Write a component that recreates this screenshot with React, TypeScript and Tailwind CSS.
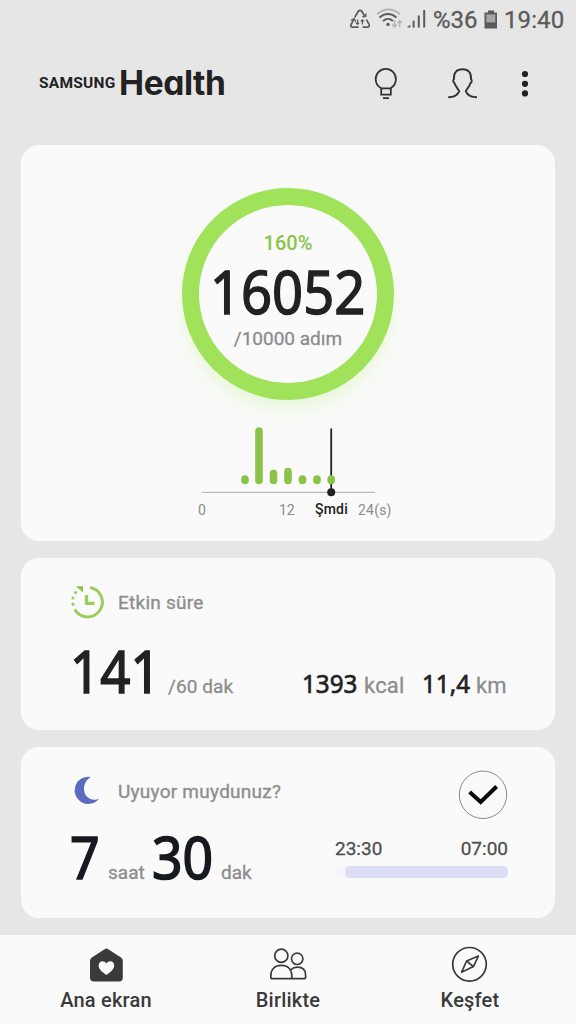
import type { ReactNode } from "react";

// Step counts per time slot, drawn as rounded bars above the 24h axis.
const STEP_BARS = [
  { x: 245, h: 9 },
  { x: 259, h: 57 },
  { x: 273.5, h: 14.5 },
  { x: 288, h: 16.5 },
  { x: 302.5, h: 9 },
  { x: 317, h: 9 },
  { x: 331.2, h: 9 },
];

function StatusBar() {
  return (
    <div className="flex h-10 items-center text-[24px] leading-10 text-[#5c5c5c] [-webkit-text-stroke:0.35px_#5c5c5c]">
      <svg className="ml-[348px] shrink-0" width="82" height="24" viewBox="348 8 82 24" fill="none">
        <g stroke="#5a5a5a" strokeWidth="1.7" strokeLinejoin="round">
          <path d="M354.7 17.4 358.3 11.2Q360 9.4 361.7 11.2L365 16.6" />
          <path d="M366.4 19.6 369.2 24.6Q369.6 27 367.4 27.1H362.6" />
          <path d="M358.6 27.1H352.6Q350.3 27 351 24.6L353.6 19.8" />
          <path d="M362.3 16.6H365.8V13.4M355.8 21.8 354.2 18.6 351 20.4" strokeWidth="1.3" />
          <path d="M357.6 19.6V24.2M355.8 22.6 357.6 24.4 359 22.8M362.4 24.6V20M360.8 21.4 362.4 19.8 364 21.4" strokeWidth="1.2" />
        </g>
        <g strokeWidth="2">
          <path d="M377.2 14.3C383.3 7.8 393.7 7.8 399.8 14.3" stroke="#b4b4b4" />
          <path d="M379.5 17.6C384.3 12.7 391.7 12.7 396.4 17.6" stroke="#5a5a5a" />
          <path d="M383 21.1C386 18.2 390 18.2 393 21.1" stroke="#5a5a5a" />
        </g>
        <circle cx="388" cy="24.4" r="1.7" fill="#5a5a5a" />
        <path d="M394.6 20.5V26.4M392.4 24.4 394.6 26.8 396.8 24.4M399.6 27V21M397.4 23 399.6 20.6 401.8 23" stroke="#b4b4b4" strokeWidth="1.5" />
        <path d="M407 27.5 410.2 24.4V27.5ZM412.6 20.8H414.6V27.5H412.6ZM417.8 15.4H419.8V27.5H417.8ZM423.2 10H425.2V27.5H423.2Z" fill="#5a5a5a" />
      </svg>
      <span className="ml-[3px] w-[51px] shrink-0">%36</span>
      <svg className="shrink-0" width="14" height="20" viewBox="0 0 14 20">
        <path d="M4 .5H10V2.6H13V18.4H.5V2.6H4Z" fill="#5a5a5a" />
        <path d="M2.3 4.4H11.3V12.4H2.3Z" fill="#a6a6a6" />
      </svg>
      <span className="ml-[6px] shrink-0 tracking-[0.1px]">19:40</span>
    </div>
  );
}

function Header() {
  return (
    <header className="flex h-[87px] items-center pl-[39px] text-[#222]">
      <span className="w-[80px] shrink-0 text-[15.5px] leading-none font-bold tracking-[0.25px]">SAMSUNG</span>
      <span className="w-[108px] shrink-0 font-[Inter] text-[33.5px] leading-none font-bold tracking-[-0.4px] [font-feature-settings:'cv11']">
        Health
      </span>
      <svg className="ml-[147px] shrink-0" width="24" height="34" viewBox="374 67 24 34" fill="none" stroke="#333" strokeWidth="1.8">
        <path d="M381.2 88.2C377.8 86.4 375.7 83 375.7 79A10.1 10.1 0 0 1 395.9 79C395.9 83 393.8 86.4 390.6 88.2" />
        <path d="M381.2 88.3H390.8V94.6H381.2ZM383 98.2H389" />
      </svg>
      <svg className="ml-[49px] shrink-0" width="32" height="34" viewBox="447 67 32 34" fill="none" stroke="#333" strokeWidth="1.9">
        <path d="M448.2 97.2C453.7 97.1 457.5 95.2 459.2 91.3C459 89.8 455.6 87.2 454.6 83.3C453.2 82.3 452.6 80.2 453.9 79.3C453.4 72.7 456.6 69.3 462.5 69.3S471.5 72.7 471 79.3C472.4 80.2 471.8 82.3 470.4 83.3C469.4 87.2 466 89.8 465.8 91.3C467.5 95.2 471.4 97.1 477 97.2" />
      </svg>
      <svg className="ml-[42px] shrink-0" width="8" height="28" viewBox="0 0 8 28" fill="#222">
        <circle cx="4" cy="4" r="3.1" />
        <circle cx="4" cy="13.8" r="3.1" />
        <circle cx="4" cy="23.4" r="3.1" />
      </svg>
    </header>
  );
}

function Card({ className, children }: { className: string; children: ReactNode }) {
  return <section className={`mx-auto w-[534px] rounded-[18px] bg-[#fafafa] ${className}`}>{children}</section>;
}

// Condensed numerals; the box keeps the drawn width so siblings sit next to it.
function Figure({ className, children }: { className: string; children: ReactNode }) {
  return (
    <span className={`inline-block shrink-0 origin-left font-['Noto_Sans'] font-normal whitespace-nowrap ${className}`}>
      {children}
    </span>
  );
}

function StepsCard() {
  return (
    <Card className="flex h-[396px] flex-col items-center pt-[43px]">
      <div className="flex h-[212px] w-[212px] shrink-0 flex-col items-center rounded-full border-[17px] border-[#a0e35a] pt-[26px] shadow-[0_10px_18px_-2px_rgba(160,240,90,0.22)]">
        <span className="text-[20px] leading-6 font-medium text-[#8bc34a]">160%</span>
        <Figure className="mt-[4px] w-[156px] scale-x-[0.905] text-[60px] leading-[64px] text-[#222] [-webkit-text-stroke:1.4px_#222]">16052</Figure>
        <span className="mt-[4px] text-[19px] leading-6 whitespace-nowrap text-[#8c8c8c] [-webkit-text-stroke:0.3px_#8c8c8c]">/10000 adım</span>
      </div>
      <svg className="mt-[24px] shrink-0" width="212" height="76" viewBox="182 424 212 76">
        <path d="M202 492.3H375" stroke="#a8a8a8" strokeWidth="1" />
        <path d="M331.2 428.5V492" stroke="#222" strokeWidth="1.8" />
        <circle cx="331.2" cy="492.3" r="4" fill="#222" />
        {STEP_BARS.map((bar) => (
          <rect key={bar.x} x={bar.x - 3.8} y={484.3 - bar.h} width="7.6" height={bar.h} rx="3.8" fill="#8bc34a" />
        ))}
      </svg>
      <div className="mt-[1px] flex w-[212px] pl-[16px] text-[14px] leading-4 text-[#8c8c8c]">
        <span className="w-[81px] shrink-0 pt-px">0</span>
        <span className="w-[36px] shrink-0 pt-px">12</span>
        <span className="w-[43px] shrink-0 font-medium tracking-[0.2px] text-[#222]">Şmdi</span>
        <span className="shrink-0 pt-px tracking-[0.2px]">24(s)</span>
      </div>
    </Card>
  );
}

function ActiveTimeCard() {
  return (
    <Card className="mt-[17px] h-[172px] pt-[27px] pl-[49px]">
      <div className="flex h-[34px] items-center">
        <svg className="shrink-0" width="34" height="34" viewBox="70 585 34 34" fill="none">
          <path d="M90 587.5A14.8 14.8 0 1 1 74.8 609.6" stroke="#9ccc5c" strokeWidth="3" />
          <path d="M86.5 595V603.4H94.5" stroke="#9ccc5c" strokeWidth="3.2" />
          <path d="M76 586.2H83V592.6Z" fill="#8bc34a" />
          <circle cx="75.6" cy="592.6" r="1.6" fill="#9ccc5c" />
          <circle cx="73" cy="598" r="1.6" fill="#9ccc5c" />
          <circle cx="73" cy="604.2" r="1.6" fill="#9ccc5c" />
        </svg>
        <span className="ml-[14px] pt-[3px] text-[19px] tracking-[0.25px] text-[#8e8e8e] [-webkit-text-stroke:0.35px_#8e8e8e]">Etkin süre</span>
      </div>
      <div className="mt-[19px] flex items-baseline text-[#8c8c8c]">
        <Figure className="w-[98px] scale-x-[0.895] text-[59px] leading-[64px] text-[#222] [-webkit-text-stroke:1.6px_#222]">141</Figure>
        <span className="w-[134px] shrink-0 text-[19px] tracking-[0.1px] [-webkit-text-stroke:0.3px_#8c8c8c]">/60 dak</span>
        <Figure className="w-[62px] scale-x-[0.93] text-[26px] text-[#222] [-webkit-text-stroke:0.7px_#222]">1393</Figure>
        <span className="w-[58px] shrink-0 text-[22px] tracking-[0.2px] [-webkit-text-stroke:0.3px_#8c8c8c]">kcal</span>
        <Figure className="w-[54px] scale-x-[0.93] text-[26px] text-[#222] [-webkit-text-stroke:0.7px_#222]">11,4</Figure>
        <span className="text-[22px] [-webkit-text-stroke:0.3px_#8c8c8c]">km</span>
      </div>
    </Card>
  );
}

function SleepCard() {
  return (
    <Card className="mt-[17px] flex h-[171px] pl-[49px]">
      <div className="w-[265px] shrink-0 pt-[27px]">
        <div className="flex h-[34px] items-center">
          <svg className="shrink-0" width="34" height="34" viewBox="70 774 34 34">
            <path d="M90.8 777A13.6 13.6 0 1 0 99.2 798.4C92.5 802 84 797.5 84 789C84 783.5 87 779.2 90.8 777Z" fill="#5c6bc0" />
          </svg>
          <span className="ml-[14px] pt-[3px] text-[19px] tracking-[0.25px] whitespace-nowrap text-[#8e8e8e] [-webkit-text-stroke:0.35px_#8e8e8e]">
            Uyuyor muydunuz?
          </span>
        </div>
        <div className="mt-[17px] flex items-baseline text-[19px] text-[#8c8c8c]">
          <Figure className="w-[38px] scale-x-[0.9] text-[57.5px] leading-[64px] text-[#16191f] [-webkit-text-stroke:1.6px_#16191f]">7</Figure>
          <span className="w-[44px] shrink-0 [-webkit-text-stroke:0.3px_#8c8c8c]">saat</span>
          <Figure className="w-[69px] scale-x-[0.93] text-[57.5px] leading-[64px] text-[#16191f] [-webkit-text-stroke:1.6px_#16191f]">30</Figure>
          <span className="[-webkit-text-stroke:0.3px_#8c8c8c]">dak</span>
        </div>
      </div>
      <div className="flex w-[173px] flex-col items-end pt-[23px]">
        <svg width="50" height="50" viewBox="458 770 50 50" fill="none">
          <circle cx="483" cy="794.8" r="23.7" stroke="#8a8a8a" strokeWidth="1" />
          <path d="M469.6 792 480.7 802 496.6 786.5" stroke="#0a0a0a" strokeWidth="4" />
        </svg>
        <div className="mt-[17px] flex w-full justify-between text-[19px] leading-6 text-[#505050] [-webkit-text-stroke:0.3px_#505050]">
          <span>23:30</span>
          <span>07:00</span>
        </div>
        <div className="mt-[5px] flex h-3 w-full rounded-[5px] bg-[#f6f6fa]">
          <div className="ml-auto h-3 w-[163px] rounded-[5px] bg-[#dcdef8]" />
        </div>
      </div>
    </Card>
  );
}

function NavItem({ label, children }: { label: string; children: ReactNode }) {
  return (
    <div className="flex w-[182px] shrink-0 flex-col items-center pt-[10px]">
      <svg width="40" height="40" viewBox="0 0 40 40" fill="none" stroke="#3a3a3a" strokeWidth="1.7">
        {children}
      </svg>
      <span className="mt-[3px] text-[20px] leading-6 font-medium tracking-[0.2px] text-[#3a3a3a]">{label}</span>
    </div>
  );
}

function BottomNav() {
  return (
    <nav className="mt-auto flex h-[89px] bg-[#fafafa] px-[15px]">
      <NavItem label="Ana ekran">
        <path d="M18.6 4.2Q20.4 3 22.2 4.2L35 12.6Q36.8 13.8 36.8 16V32.5Q36.8 36.6 32.8 36.6H8Q4 36.6 4 32.5V16Q4 13.8 5.8 12.6Z" fill="#3a3a3a" stroke="none" />
        <path d="M20.4 30C15.5 26.5 12.6 23.8 12.6 20.4C12.6 15.8 18.2 14.6 20.4 18.6C22.6 14.6 28.2 15.8 28.2 20.4C28.2 23.8 25.3 26.5 20.4 30Z" fill="#fafafa" stroke="none" />
      </NavItem>
      <NavItem label="Birlikte">
        <circle cx="13.3" cy="10.8" r="6.6" />
        <circle cx="29.2" cy="13.8" r="5.7" />
        <path d="M2.8 31C2.8 24.5 6.5 20.3 13.3 20.3S23.8 24.5 23.8 31V33.7H4.2Q2.8 33.7 2.8 32.2ZM23.8 33.7H36.4Q37.6 33.7 37.6 32.4V30C37.6 25 34.6 22.2 29.4 22.2Q25.4 22.2 23 24.6" />
      </NavItem>
      <NavItem label="Keşfet">
        <circle cx="19.5" cy="19.3" r="16.8" />
        <path d="M28.4 11 23.4 21.6 11.6 27.2 16.6 16Z" strokeLinejoin="round" />
        <path d="M16.6 16 23.4 21.6" />
      </NavItem>
    </nav>
  );
}

export default function App() {
  return (
    <div className="flex h-[1024px] w-[576px] flex-col overflow-hidden bg-[#e6e6e6] font-[Roboto,sans-serif]">
      <StatusBar />
      <Header />
      <main className="pt-[18px]">
        <StepsCard />
        <ActiveTimeCard />
        <SleepCard />
      </main>
      <BottomNav />
    </div>
  );
}
